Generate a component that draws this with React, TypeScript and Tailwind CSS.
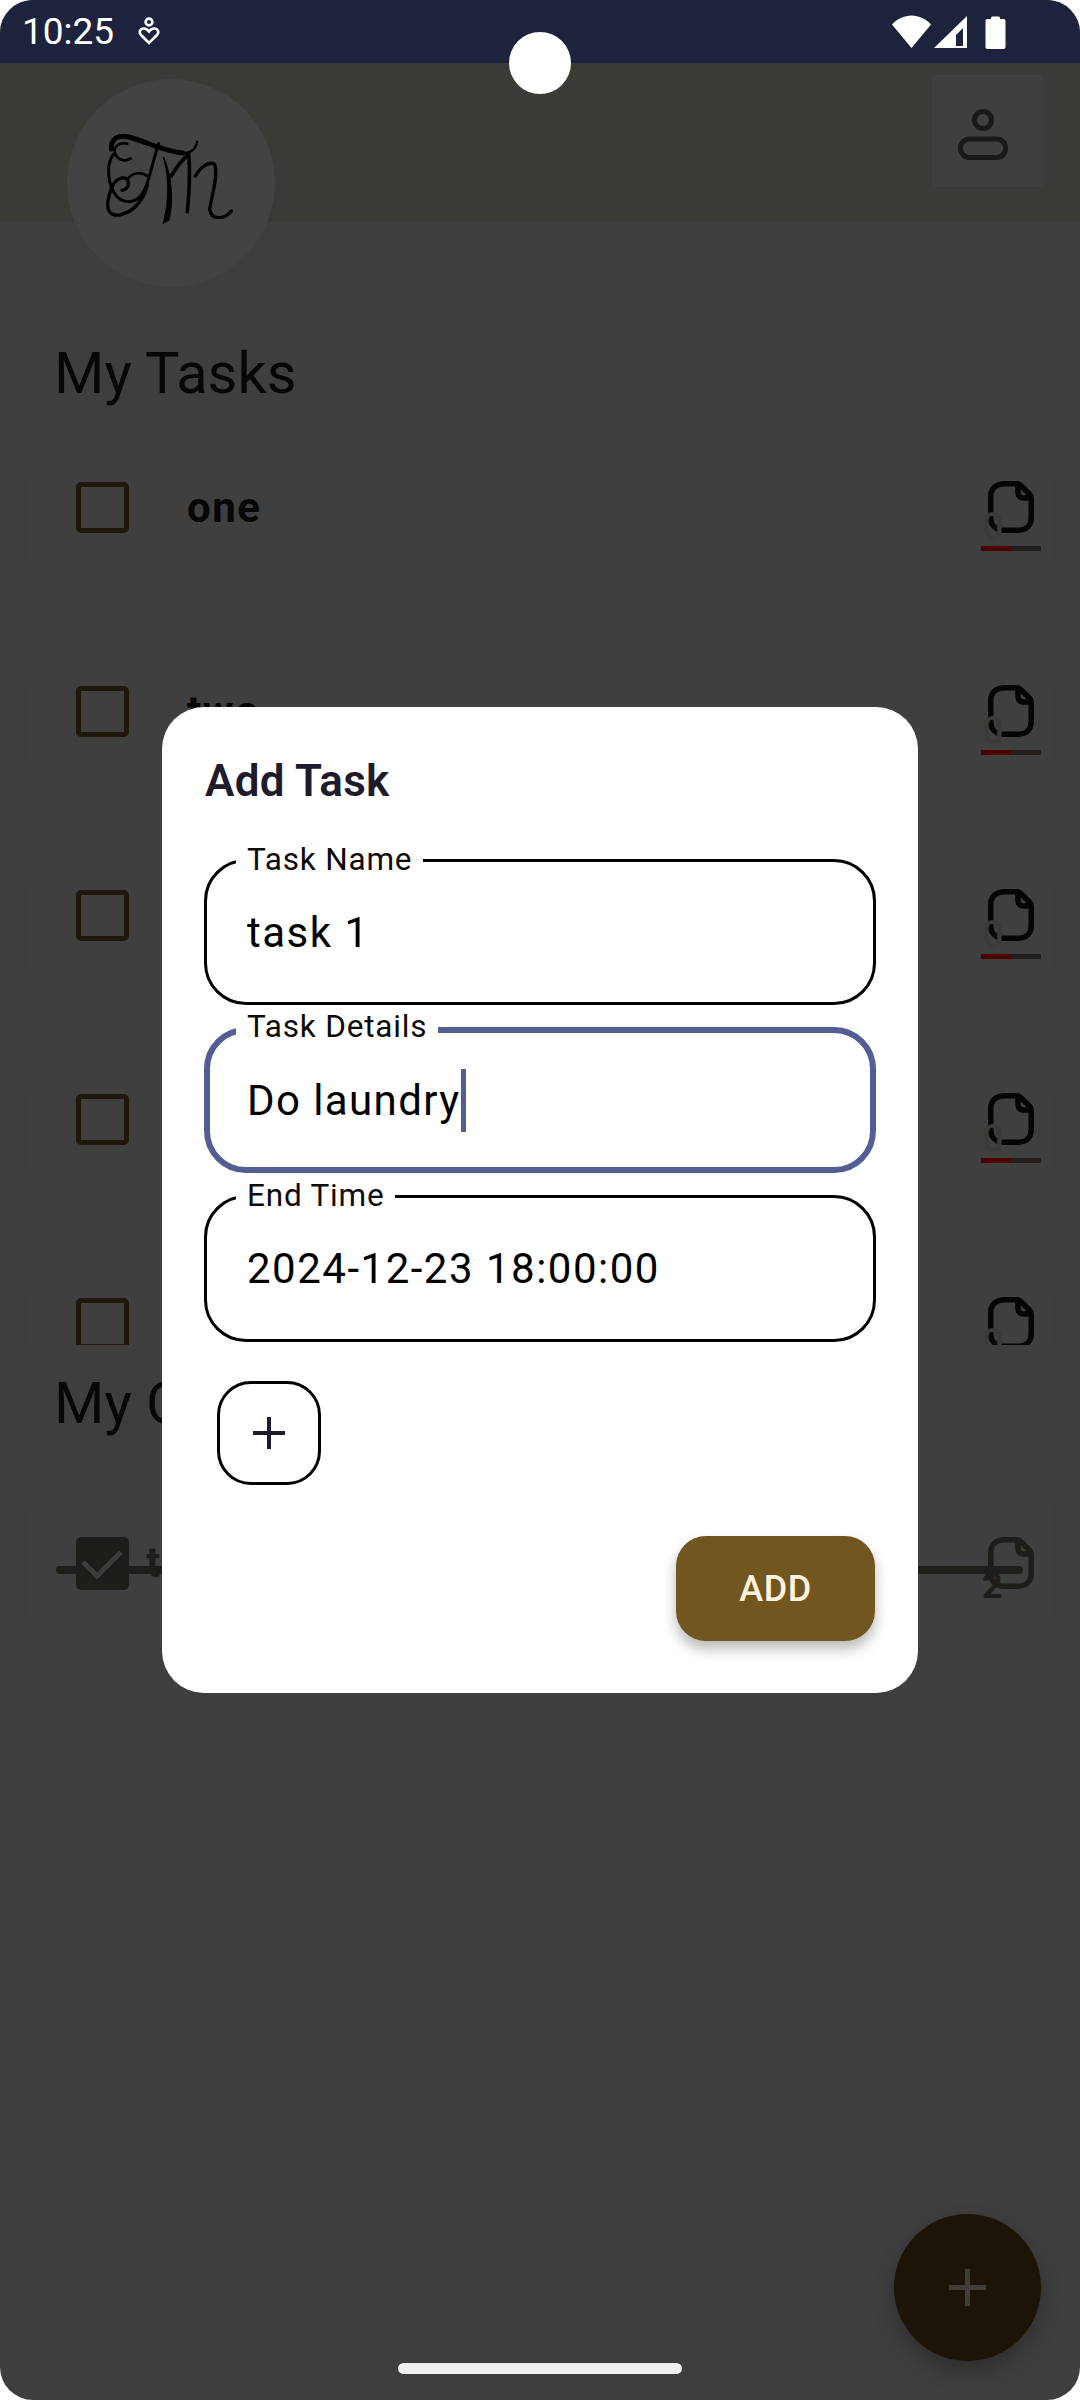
const fileStroke = "M17 2.75H28.5C30 2.75 31.5 3.25 32.5 4.25L42 13.75C43 14.75 43.25 16 43.25 17.5V36.5C43.25 44 38.5 49.25 30.5 49.25H15.5C7.5 49.25 2.75 44 2.75 36.5V15.5C2.75 7.5 8 2.75 17 2.75Z";

const FileIcon = ({ className }: { className: string }) => (
  <svg width="46" height="52" viewBox="0 0 46 52" fill="none" stroke="currentColor" strokeWidth="5.5" className={className}>
    <path d={fileStroke} />
    <path d="M30 3V11.5C30 15 32 17 35.5 17H43.5" />
  </svg>
);

const Logo = () => (
  <svg width="160" height="120" viewBox="0 0 480 360" fill="none" stroke="#000" strokeLinecap="round" strokeWidth="10" className="-translate-x-[3px] -translate-y-[2px]">
    <path strokeWidth="15" d="M70 84C68 52 92 40 122 48C170 60 222 90 284 96" />
    <path strokeWidth="7" d="M284 96C308 98 324 84 327 62" />
    <path d="M128 112C110 125 85 115 80 95C78 78 92 62 118 68" strokeWidth="8" />
    <path d="M76 100C54 130 58 190 85 225C105 245 135 250 158 225C182 195 188 140 212 68" strokeWidth="9" />
    <path d="M102 208C126 204 128 172 105 170C80 175 70 195 63 226C52 265 65 286 95 282C130 275 165 245 178 192" />
    <path d="M178 166C160 150 135 155 120 172" strokeWidth="8" />
    <path fill="#000" strokeWidth="4" d="M226 108C254 170 256 250 242 298L226 306C242 250 246 170 226 108Z" />
    <path d="M250 165C268 132 288 112 302 100C308 160 302 230 298 272" strokeWidth="11" />
    <path d="M322 165C340 135 365 120 380 130C392 160 370 230 365 265C370 300 410 295 430 270" strokeWidth="10" />
  </svg>
);

const TaskRow = ({ name }: { name: string }) => (
  <div className="flex h-[120px] shrink-0 items-start rounded-[30px] bg-[#3f3f3f] pt-[22px] pl-[49px] pr-[12px]">
    <div className="h-[51px] w-[53px] shrink-0 rounded-[5px] border-[5px] border-[#1e170a]" />
    <div className="ml-[58px] text-[42px] leading-[51px] font-bold tracking-[1.5px] text-[#060607]">{name}</div>
    <div className="relative ml-auto h-[69px] w-[60px] shrink-0">
      <FileIcon className="absolute left-[7px] top-[-1px] text-[#050505]" />
      <div className="absolute left-[1px] top-[26px] text-[38px] leading-[38px] font-medium text-[#3a3a3a]">0</div>
      <div className="absolute left-0 top-[64px] flex h-[5px] w-[60px] bg-[#211e1c]">
        <div className="h-full w-[30px] bg-[#4d0000]" />
      </div>
    </div>
  </div>
);

const Field = ({ label, value, focused, last }: { label: string; value: string; focused?: boolean; last?: boolean }) => (
  <fieldset
    className={
      focused
        ? "mt-[2px] h-[155px] rounded-[42px] border-[6px] border-[#525e94]"
        : last
          ? "h-[158px] rounded-[42px] border-[3px] border-black"
          : "h-[157px] rounded-[42px] border-[3px] border-black"
    }
  >
    <legend
      className={
        focused
          ? "ml-[26px] px-[11px] pb-[6px] text-[31.5px] leading-[18px] tracking-[0.8px] text-[#0b0b0b]"
          : "ml-[29px] px-[11px] text-[31.5px] leading-[24px] tracking-[0.8px] text-[#0b0b0b]"
      }
    >
      {label}
    </legend>
    <div
      className={
        focused
          ? "flex h-[125px] items-center pb-[9px] pl-[37px] text-[42px] tracking-[1.4px] text-black"
          : "flex h-[130px] items-center pb-[10px] pl-[40px] text-[42px] tracking-[1.5px] text-black"
      }
    >
      {value}
      {focused && <span className="h-[63px] w-[5px] bg-[#525e94]" />}
    </div>
  </fieldset>
);

export default function App() {
  return (
    <div className="relative h-[2400px] w-[1080px] overflow-hidden bg-white font-['Roboto',sans-serif]">
      <div className="flex h-full flex-col overflow-hidden rounded-[33px] bg-[#3e3e3e]">
        {/* status bar */}
        <div className="flex h-[63px] shrink-0 items-center bg-[#1e233d] pl-[22px] pr-[74px] text-white">
          <span className="text-[37px] leading-none">10:25</span>
          <svg width="22" height="29" viewBox="0 0 22 29" fill="none" stroke="#fff" strokeWidth="2.6" className="ml-[24px]">
            <circle cx="11" cy="5" r="3.4" />
            <path d="M11 26L3 18C0 14.5 3 11 6.5 11.5C8.5 12 10 13 11 14.5C12 13 13.5 12 15.5 11.5C19 11 22 14.5 19 18Z" />
          </svg>
          <svg width="114" height="34" viewBox="0 0 114 34" fill="#fff" className="ml-auto">
            <path d="M0 9.5C5 4 12 0.5 19.5 0.5S34 4 39 9.5L19.5 33Z" />
            <path fillRule="evenodd" d="M42 33L75 1V33ZM64 31H71V13L64 20Z" />
            <path d="M99 3a1.5 1.5 0 0 1 1.5-1.5h6A1.5 1.5 0 0 1 108 3v1h3.5a2 2 0 0 1 2 2v26a2 2 0 0 1-2 2h-16a2 2 0 0 1-2-2V6a2 2 0 0 1 2-2H99Z" />
          </svg>
        </div>

        {/* app bar */}
        <div className="flex h-[159px] shrink-0 items-start justify-between bg-[#3c3a36] pl-[67px] pr-[37px]">
          <div className="mt-[16px] flex h-[208px] w-[208px] items-center justify-center rounded-full bg-[#434343]">
            <Logo />
          </div>
          <div className="mt-[12px] flex h-[112px] w-[111px] items-center justify-center bg-[#3f3f3e] pr-[10px] pt-[6px]">
            <svg width="50" height="52" viewBox="0 0 50 52" fill="none" stroke="#1a1917" strokeWidth="5">
              <circle cx="25" cy="12" r="8.5" />
              <rect x="2.5" y="31" width="45" height="18.5" rx="9" />
            </svg>
          </div>
        </div>

        {/* page body */}
        <div className="flex min-h-0 flex-1 flex-col">
          <h1 className="mt-[119px] pl-[54px] text-[57.75px] leading-[64px] font-normal text-[#060607]">My Tasks</h1>
          <div className="mx-[27px] mt-[55px] flex h-[885px] shrink-0 flex-col gap-[84px] overflow-hidden">
            <TaskRow name="one" />
            <TaskRow name="two" />
            <TaskRow name="three" />
            <TaskRow name="four" />
            <TaskRow name="five" />
          </div>
          <h2 className="mt-[26px] pl-[54px] text-[57.75px] leading-[64px] font-normal text-[#060607]">My Completed</h2>
          <div className="relative mx-[27px] mt-[52px] flex h-[150px] items-start rounded-[30px] bg-[#3f3f3f] pt-[50px] pl-[49px] pr-[12px]">
            <div className="absolute left-[29px] top-[79px] h-[8px] w-[967px] rounded-full bg-[#1e1d1a]" />
            <div className="relative h-[53px] w-[53px] shrink-0 rounded-[5px] bg-[#1e1d1a]">
              <svg width="53" height="53" viewBox="0 0 53 53" fill="none" stroke="#3d3d3d" strokeWidth="5">
                <path d="M7 25L21 39L45 15" />
              </svg>
            </div>
            <div className="relative ml-[17px] text-[42px] leading-[51px] font-bold tracking-[1.5px] text-[#1e1d1a]">task</div>
            <div className="relative ml-auto h-[69px] w-[60px] shrink-0">
              <FileIcon className="absolute left-[7px] top-0 text-[#1e1d1a]" />
              <div className="absolute left-[1px] top-[31px] text-[36px] leading-[36px] font-bold text-[#1e1d1a]">2</div>
            </div>
          </div>
        </div>

        {/* gesture handle */}
        <div className="mx-auto mb-[26px] h-[11px] w-[284px] shrink-0 rounded-full bg-[#f0f0f0]" />
      </div>

      {/* camera cutout */}
      <div className="absolute left-[509px] top-[32px] h-[62px] w-[62px] rounded-full bg-white" />

      {/* fab */}
      <div className="absolute left-[894px] top-[2214px] flex h-[147px] w-[147px] items-center justify-center rounded-full bg-[#1c1406] shadow-[0_10px_20px_rgba(0,0,0,0.25)]">
        <svg width="37" height="37" viewBox="0 0 37 37" stroke="#403d37" strokeWidth="5">
          <path d="M18.5 0V37M0 18.5H37" />
        </svg>
      </div>

      {/* add task dialog */}
      <div className="absolute left-[162px] top-[707px] flex h-[986px] w-[756px] flex-col rounded-[42px] bg-white px-[42px]">
        <h3 className="ml-[1px] mt-[49px] text-[44px] leading-[50px] font-semibold tracking-[0.3px] text-[#1d1b2c]">Add Task</h3>
        <div className="mt-[42px] flex flex-col gap-[11px]">
          <Field label="Task Name" value="task 1" />
          <Field label="Task Details" value="Do laundry" focused />
          <Field label="End Time" value="2024-12-23 18:00:00" last />
        </div>
        <div className="ml-[13px] mt-[39px] flex h-[104px] w-[104px] items-center justify-center rounded-[34px] border-[3px] border-black">
          <svg width="32" height="32" viewBox="0 0 32 32" stroke="#1d1b2c" strokeWidth="4">
            <path d="M16 0V32M0 16H32" />
          </svg>
        </div>
        <div className="mr-[1px] mt-[51px] flex justify-end">
          <div className="flex h-[105px] w-[199px] items-center justify-center rounded-[30px] bg-[#72561f] text-[36px] font-medium tracking-[0.5px] text-[#fdf2dc] shadow-[0_8px_14px_rgba(0,0,0,0.28)]">
            ADD
          </div>
        </div>
      </div>
    </div>
  );
}
